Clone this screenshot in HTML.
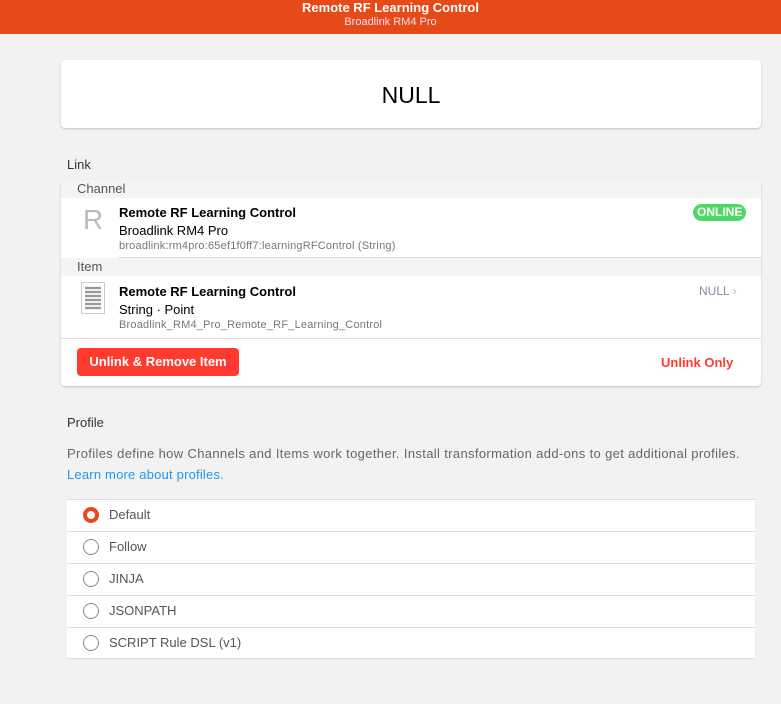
<!DOCTYPE html>
<html><head><style>
*{box-sizing:border-box;margin:0;padding:0}
body{width:781px;height:704px;background:#f2f2f2;font-family:"Liberation Sans",sans-serif;position:relative;overflow:hidden;color:#000}
.hdr{position:absolute;left:0;top:0;width:781px;height:34px;background:#e64a19;color:#fff;text-align:center}
.hdr .t{font-weight:bold;font-size:13px;position:absolute;top:0;width:100%;line-height:15px}
.hdr .s{font-size:11px;position:absolute;top:16px;width:100%;line-height:13px;color:#fde}
.card{position:absolute;left:61px;width:700px;background:#fff;border-radius:4px;box-shadow:0 1px 2px rgba(0,0,0,.2)}
.abs{position:absolute}
.sec{font-size:13px;color:#333}
.gh{position:absolute;left:0;width:700px;height:18px;background:#f4f4f4;font-size:13px;color:#555;padding-left:16px;line-height:18px}
.t1{font-size:13px;font-weight:bold}
.t2{font-size:13px}
.t3{font-size:11px;color:#777}
.row{position:absolute;left:0;width:688px;height:32px;border-bottom:1px solid #ddd}
.row .r{position:absolute;left:16px;top:7px;width:16px;height:16px;border:1.5px solid #888;border-radius:50%}
.row .l{position:absolute;left:42px;top:7px;font-size:13px;color:#555}
</style></head><body>
<div class="hdr"><div class="t">Remote RF Learning Control</div><div class="s">Broadlink RM4 Pro</div></div>
<div class="card" style="top:60px;height:68px"><div class="abs" style="width:100%;top:22px;text-align:center;font-size:23px">NULL</div></div>
<div class="abs sec" style="left:67px;top:157px">Link</div>
<div class="card" style="top:180px;height:206px">
 <div class="gh" style="top:0">Channel</div>
 <div class="abs" style="left:22px;top:24px;font-size:28px;color:#bbb;font-weight:300">R</div>
 <div class="abs t1" style="left:58px;top:25px">Remote RF Learning Control</div>
 <div class="abs t2" style="left:58px;top:43px">Broadlink RM4 Pro</div>
 <div class="abs t3" style="left:58px;top:60px;letter-spacing:0.2px">broadlink:rm4pro:65ef1f0ff7:learningRFControl (String)</div>
 <div class="abs" style="left:632px;top:24px;height:17px;padding:0 4px;background:#4cd964;color:#fff;font-weight:bold;font-size:12px;line-height:17px;border-radius:9px">ONLINE</div>
 <div class="abs" style="left:58px;top:77px;width:642px;border-top:1px solid #ddd"></div>
 <div class="gh" style="top:78px">Item</div>
 <div class="abs" style="left:20px;top:102px;width:24px;height:32px;border:1px solid #ccc;background:repeating-linear-gradient(#999 0 2px,#eee 2px 4px);background-clip:content-box;padding:3px"></div>
 <div class="abs t1" style="left:58px;top:104px">Remote RF Learning Control</div>
 <div class="abs t2" style="left:58px;top:122px">String · Point</div>
 <div class="abs t3" style="left:58px;top:139px;letter-spacing:0.2px">Broadlink_RM4_Pro_Remote_RF_Learning_Control</div>
 <div class="abs" style="left:638px;top:104px;font-size:12px;color:#8a8aa0">NULL <span style="color:#bbb">›</span></div>
 <div class="abs" style="left:0;top:158px;width:700px;border-top:1px solid #ddd"></div>
 <div class="abs" style="left:16px;top:168px;width:162px;height:28px;background:#ff3b30;color:#fff;font-weight:bold;font-size:13px;line-height:28px;text-align:center;border-radius:4px">Unlink &amp; Remove Item</div>
 <div class="abs" style="left:600px;top:175px;color:#ff3b30;font-weight:bold;font-size:13px">Unlink Only</div>
</div>
<div class="abs sec" style="left:67px;top:415px">Profile</div>
<div class="abs" style="left:67px;top:446px;font-size:13px;color:#666;letter-spacing:0.35px">Profiles define how Channels and Items work together. Install transformation add-ons to get additional profiles.</div>
<div class="abs" style="left:67px;top:467px;font-size:13px;color:#2196f3;letter-spacing:0.2px">Learn more about profiles.</div>
<div class="abs" style="left:67px;top:499px;width:688px;height:160px;background:#fff;border-top:1px solid #ddd;border-bottom:1px solid #ddd">
 <div class="row" style="top:0"><div class="r" style="border:4.5px solid #e64a19"></div><div class="l">Default</div></div>
 <div class="row" style="top:32px"><div class="r"></div><div class="l">Follow</div></div>
 <div class="row" style="top:64px"><div class="r"></div><div class="l">JINJA</div></div>
 <div class="row" style="top:96px"><div class="r"></div><div class="l">JSONPATH</div></div>
 <div class="row" style="top:128px;border:0"><div class="r"></div><div class="l">SCRIPT Rule DSL (v1)</div></div>
</div>
</body></html>
